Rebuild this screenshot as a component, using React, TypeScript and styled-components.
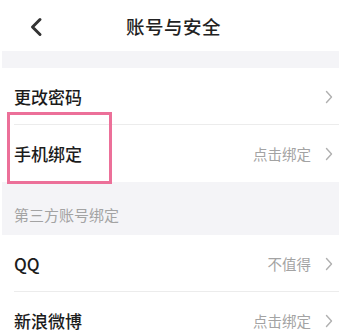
import React from "react";
import styled, { createGlobalStyle } from "styled-components";

const GlobalStyle = createGlobalStyle`
  html, body {
    margin: 0;
    padding: 0;
    background: #ffffff;
  }
  body {
    font-family: "Noto Sans CJK SC", "Noto Sans", sans-serif;
    -webkit-font-smoothing: antialiased;
  }
`;

const Page = styled.div`
  width: 339px;
  height: 334px;
  overflow: hidden;
  padding-left: 2px;
  box-sizing: border-box;
  background: #fff;
`;

const Header = styled.header`
  position: relative;
  height: 51px;
  display: flex;
  align-items: center;
  justify-content: center;
  background: #fff;
`;

const BackButton = styled.button`
  position: absolute;
  left: 22px;
  top: 14px;
  width: 24px;
  height: 26px;
  padding: 0;
  border: none;
  background: none;
  display: flex;
  align-items: center;
  justify-content: center;
`;

const Title = styled.h1`
  margin: 0 0 0 6px;
  font-size: 18.5px;
  font-weight: 500;
  color: #222;
  letter-spacing: 0.5px;
`;

const Gap = styled.div<{ h: number }>`
  height: ${(p) => p.h}px;
  background: #f4f4f7;
`;

const SectionTitle = styled.div`
  height: 53px;
  box-sizing: border-box;
  background: #f4f4f7;
  display: flex;
  align-items: flex-end;
  padding: 0 0 10px 12px;
  font-size: 15px;
  color: #a3a3a3;
`;

const Row = styled.div<{ divider?: boolean }>`
  position: relative;
  height: 57px;
  display: flex;
  align-items: center;
  padding-left: 12px;
  padding-right: 6px;
  background: #fff;
  &::after {
    content: "";
    display: ${(p) => (p.divider ? "block" : "none")};
    position: absolute;
    left: 12px;
    right: 0;
    bottom: 0;
    height: 1px;
    background: #ececec;
  }
`;

const Label = styled.span`
  flex: 1;
  font-size: 17px;
  font-weight: 500;
  color: #1c1c1c;
`;

const Value = styled.span`
  font-size: 14.5px;
  color: #a3a3a3;
  margin-right: 14px;
`;

const Highlight = styled.div`
  position: absolute;
  left: 5px;
  top: -13px;
  width: 99px;
  height: 66px;
  border: 3px solid #ec7099;
  pointer-events: none;
`;

const Chevron = () => (
  <svg width="8" height="14" viewBox="0 0 8 14">
    <path d="M1.5 1.5 L6.5 7 L1.5 12.5" fill="none" stroke="#b0b0b0" strokeWidth="1.4" strokeLinecap="round" strokeLinejoin="round" />
  </svg>
);

const BackIcon = () => (
  <svg width="14" height="20" viewBox="0 0 14 20">
    <path d="M11 2.5 L3.5 10 L11 17.5" fill="none" stroke="#333" strokeWidth="3" strokeLinecap="round" strokeLinejoin="round" />
  </svg>
);

interface Item {
  label: string;
  value?: string;
  highlight?: boolean;
}

const SettingRow: React.FC<Item & { divider?: boolean }> = ({ label, value, highlight, divider }) => (
  <Row divider={divider}>
    {highlight && <Highlight />}
    <Label>{label}</Label>
    {value && <Value>{value}</Value>}
    <Chevron />
  </Row>
);

const accountItems: Item[] = [
  { label: "更改密码" },
  { label: "手机绑定", value: "点击绑定", highlight: true },
];

const thirdPartyItems: Item[] = [
  { label: "QQ", value: "不值得" },
  { label: "新浪微博", value: "点击绑定" },
];

export default function App() {
  return (
    <>
      <GlobalStyle />
      <Page>
        <Header>
          <BackButton aria-label="返回">
            <BackIcon />
          </BackButton>
          <Title>账号与安全</Title>
        </Header>
        <Gap h={17} />
        {accountItems.map((item, i) => (
          <SettingRow key={item.label} {...item} divider={i < accountItems.length - 1} />
        ))}
        <SectionTitle>第三方账号绑定</SectionTitle>
        {thirdPartyItems.map((item, i) => (
          <SettingRow key={item.label} {...item} divider={i < thirdPartyItems.length - 1} />
        ))}
      </Page>
    </>
  );
}
